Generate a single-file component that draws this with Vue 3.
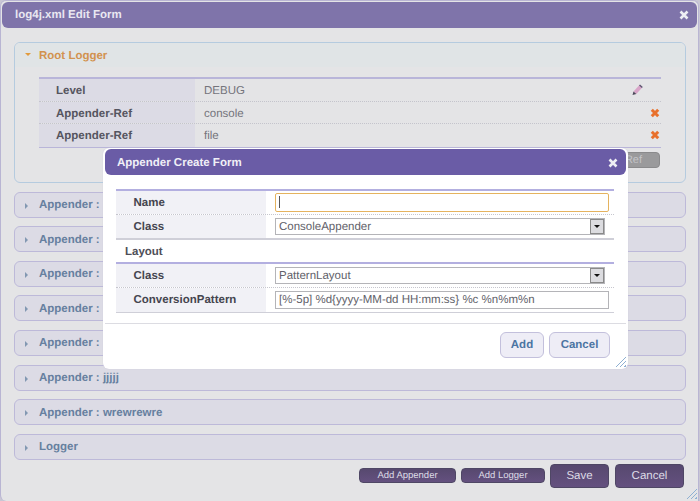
<template>
  <div class="window">
    <div class="title-bar">
      <span>log4j.xml Edit Form</span>
      <svg class="close" width="10" height="10" viewBox="0 0 10 10"><path d="M1.500 1.500l7 7M8.500 1.500l-7 7" /></svg>
    </div>

    <div class="accordion">
      <div class="panel open">
        <div class="panel-head root-head">
          <span class="arrow-down"></span>
          Root Logger
        </div>
        <div class="panel-body">
          <div class="root-table">
            <div v-for="(row, i) in rootRows" :key="i" class="root-row">
              <div class="root-label">{{ row.label }}</div>
              <div class="root-value">{{ row.value }}</div>
              <svg v-if="row.edit" class="pencil" width="12" height="12" viewBox="0 0 12 12">
                <path d="M2.500 7.500l5.500-6 2.800 2.500-5.500 6z" fill="#d8a4c8" />
                <path d="M8 1.500l1-1 2.800 2.500-1 1z" fill="#5f5270" />
                <path d="M2.500 7.500l-1 3.500 3.800-1z" fill="#4b4658" />
              </svg>
              <svg v-else class="remove" width="10" height="10" viewBox="0 0 10 10"><path d="M1.800 1.800l6.400 6.400M8.200 1.800l-6.400 6.400" /></svg>
            </div>
          </div>
          <div class="ref-line"><span class="ref-btn">Add Appender-Ref</span></div>
        </div>
      </div>

      <div v-for="(name, i) in panels" :key="i" class="panel-head closed">
        <span class="arrow-right"></span>
        {{ name }}
      </div>
    </div>

    <div class="footer">
      <button class="btn small b1">Add Appender</button>
      <button class="btn small b2">Add Logger</button>
      <button class="btn big b3">Save</button>
      <button class="btn big b4">Cancel</button>
    </div>
    <div class="grip outer-grip"></div>

    <div class="modal">
      <div class="modal-title">
        <span>Appender Create Form</span>
        <svg class="close" width="10" height="10" viewBox="0 0 10 10"><path d="M1.500 1.500l7 7M8.500 1.500l-7 7" /></svg>
      </div>
      <div class="modal-body">
        <div class="form-table first">
          <div class="form-row dotted">
            <div class="form-label">Name</div>
            <div class="form-cell name-cell">
              <div class="field focus"><span class="caret"></span></div>
            </div>
          </div>
          <div class="form-row">
            <div class="form-label">Class</div>
            <div class="form-cell">
              <div class="field select">ConsoleAppender<span class="drop"></span></div>
            </div>
          </div>
        </div>
        <div class="section">Layout</div>
        <div class="form-table second">
          <div class="form-row dotted">
            <div class="form-label">Class</div>
            <div class="form-cell">
              <div class="field select">PatternLayout<span class="drop"></span></div>
            </div>
          </div>
          <div class="form-row">
            <div class="form-label">ConversionPattern</div>
            <div class="form-cell">
              <div class="field pattern">[%-5p] %d{yyyy-MM-dd HH:mm:ss} %c %n%m%n</div>
            </div>
          </div>
        </div>
      </div>
      <div class="modal-foot">
        <button class="light-btn add">Add</button>
        <button class="light-btn cancel">Cancel</button>
      </div>
      <div class="grip"></div>
    </div>
  </div>
</template>

<script setup>
const rootRows = [
  { label: 'Level', value: 'DEBUG', edit: true },
  { label: 'Appender-Ref', value: 'console' },
  { label: 'Appender-Ref', value: 'file' }
]

const panels = [
  'Appender :',
  'Appender :',
  'Appender :',
  'Appender :',
  'Appender :',
  'Appender : jjjjj',
  'Appender : wrewrewre',
  'Logger'
]
</script>

<style>
html, body {
  margin: 0;
  background: #c9c7d4;
}
</style>

<style scoped>
.window {
  position: relative;
  box-sizing: border-box;
  width: 699px;
  height: 501px;
  padding: 1px 1px 0 1px;
  background: #e4e4e6;
  border: 1px solid #b9b5d3;
  border-bottom: 0;
  border-radius: 6px 6px 0 6px;
  font-family: "Liberation Sans", Arial, sans-serif;
  font-size: 11.500px;
  color: #55555f;
  overflow: hidden;
  text-rendering: geometricPrecision;
}

.title-bar {
  display: flex;
  align-items: center;
  justify-content: space-between;
  height: 26px;
  padding: 0 8px 0 13px;
  background: #7f74aa;
  border-radius: 6px;
  color: #e9e7f1;
  font-weight: bold;
}

.close path {
  stroke: #eeeef4;
  stroke-width: 2.600;
  fill: none;
}

.accordion {
  margin: 14px 11px 0 12px;
  display: flex;
  flex-direction: column;
  gap: 8.600px;
}

.panel {
  border: 1px solid #b5cbdf;
  border-radius: 6px;
}

.panel-head {
  display: flex;
  align-items: center;
  box-sizing: border-box;
  height: 26px;
  padding: 1px 0 0 24px;
  font-weight: bold;
}

.root-head {
  height: 24px;
  background: #e0e4e6;
  border-radius: 5px 5px 0 0;
  color: #d2924f;
}

.closed {
  position: relative;
  background: #dcdbe5;
  border: 1px solid #bdb9d9;
  border-radius: 6px;
  color: #66809f;
}

.arrow-down {
  position: absolute;
  left: 24px;
  top: 52px;
  border: 3px solid transparent;
  border-top: 3px solid #e29a3c;
  border-bottom: 0;
}

.arrow-right {
  position: absolute;
  left: 10px;
  top: 10px;
  border: 3px solid transparent;
  border-left: 3px solid #8298b2;
  border-right: 0;
}

.panel-body {
  height: 115px;
  box-sizing: border-box;
  padding: 10px 24px 0 24px;
}

.root-table {
  border-top: 2px solid #b9b5d9;
  border-bottom: 1px solid #b9b5d9;
}

.root-row {
  position: relative;
  display: flex;
  height: 22.500px;
  line-height: 24px;
  border-bottom: 1px dotted #c4c4cc;
  box-sizing: border-box;
}

.root-row:last-child {
  border-bottom: 0;
}

.root-label {
  width: 156px;
  box-sizing: border-box;
  padding-left: 17px;
  background: #dcdbe5;
  font-weight: bold;
}

.root-value {
  padding-left: 9px;
  color: #74747c;
}

.pencil {
  position: absolute;
  right: 18px;
  top: 5px;
}

.remove {
  position: absolute;
  right: 1px;
  top: 6px;
}

.remove path {
  stroke: #e8702c;
  stroke-width: 3;
  fill: none;
}

.ref-line {
  display: flex;
  justify-content: flex-end;
  margin-top: 4px;
  padding-right: 1px;
}

.ref-btn {
  box-sizing: border-box;
  height: 16px;
  padding: 0 17px;
  line-height: 14px;
  background: #9a9a9c;
  border: 1px solid #8a8a8c;
  border-radius: 4px;
  color: #c4c4c8;
  font-size: 11px;
}

.footer {
  display: flex;
  align-items: flex-end;
  margin: 4px 13px 0 0;
  justify-content: flex-end;
  height: 24px;
}

.btn {
  box-sizing: border-box;
  padding: 0;
  background: linear-gradient(#57496f, #64507f);
  border: 1px solid #4f4765;
  font-family: inherit;
  color: #dddbe6;
  text-rendering: geometricPrecision;
}

.btn.small {
  height: 15px;
  margin-bottom: 5px;
  border-radius: 4px;
  font-size: 9.500px;
  line-height: 13px;
}

.btn.big {
  height: 24px;
  border-radius: 4px;
  font-size: 11.500px;
}

.b1 { width: 97px; margin-right: 5px; }
.b2 { width: 84px; margin-right: 5px; }
.b3 { width: 59px; margin-right: 6px; }
.b4 { width: 69px; }

.grip {
  position: absolute;
  right: 2px;
  bottom: 2px;
  width: 11px;
  height: 11px;
  background: repeating-linear-gradient(135deg, transparent 0 2px, #8fb0d2 2px 3px);
  clip-path: polygon(100% 0, 100% 100%, 0 100%);
}

.outer-grip {
  right: 1px;
  bottom: 2px;
}

.modal {
  position: absolute;
  left: 102px;
  top: 147px;
  box-sizing: border-box;
  width: 525px;
  height: 221px;
  padding: 1px 2px 0 2px;
  background: #fff;
  border-radius: 6px;
  box-shadow: 0 0 1px #c0bdd3;
  font-weight: normal;
}

.modal-title {
  display: flex;
  align-items: center;
  justify-content: space-between;
  height: 26px;
  padding: 1px 8px 0 12px;
  box-sizing: border-box;
  background: #6a5ca6;
  border-radius: 6px;
  color: #f0eff6;
  font-weight: bold;
}

.modal-body {
  padding: 14px 12px 0 11px;
}

.form-table {
  border-top: 2px solid #b3afe0;
  border-bottom: 1px solid #cfcfd8;
}

.form-table.first {
  border-bottom-width: 2px;
}

.form-row {
  display: flex;
  height: 23.500px;
  box-sizing: border-box;
}

.second .form-row {
  height: 24px;
}

.form-row.dotted {
  border-bottom: 1px dotted #c6c6ce;
}

.form-label {
  width: 150px;
  box-sizing: border-box;
  padding-left: 17.500px;
  background: #f1f1f6;
  line-height: 25px;
  font-weight: bold;
  color: #45454f;
}

.second .form-label {
  line-height: 24px;
}

.form-cell {
  flex: 1;
  padding: 3px 5px 0 9px;
  box-sizing: border-box;
}

.name-cell {
  padding-top: 2px;
}

.field {
  position: relative;
  box-sizing: border-box;
  height: 17px;
  padding-left: 3px;
  line-height: 16px;
  background: #fff;
  border: 1px solid #b4b4b8;
  color: #62626a;
}

.field.select {
  width: 330px;
}

.field.pattern {
  height: 18px;
  line-height: 16px;
}

.field.focus {
  height: 18.500px;
  border: 1px solid #e5b35f;
  border-radius: 2px;
}

.caret {
  display: inline-block;
  width: 1px;
  height: 12px;
  margin-top: 2px;
  background: #555;
}

.drop {
  position: absolute;
  right: 0;
  top: 0;
  width: 14px;
  height: 15px;
  background: #dcdce0;
  border: 1px solid #8a8a8a;
  box-sizing: border-box;
}

.drop::after {
  content: "";
  position: absolute;
  left: 3px;
  top: 5px;
  border: 3.500px solid transparent;
  border-top: 3.500px solid #111;
  border-bottom: 0;
}

.section {
  height: 21.500px;
  line-height: 24px;
  padding-left: 9px;
  font-weight: bold;
  color: #4f4f58;
}

.modal-foot {
  display: flex;
  justify-content: flex-end;
  gap: 5px;
  margin-top: 10px;
  padding: 8px 16px 0 0;
  border-top: 1px solid #dcdce2;
}

.light-btn {
  box-sizing: border-box;
  height: 26.500px;
  padding: 0;
  background: #eeedf6;
  border: 1px solid #c3c0dc;
  border-radius: 6px;
  font-family: inherit;
  font-size: 11.500px;
  font-weight: bold;
  color: #4c75a3;
  text-rendering: geometricPrecision;
}

.add { width: 44px; }
.cancel { width: 61px; }
</style>
